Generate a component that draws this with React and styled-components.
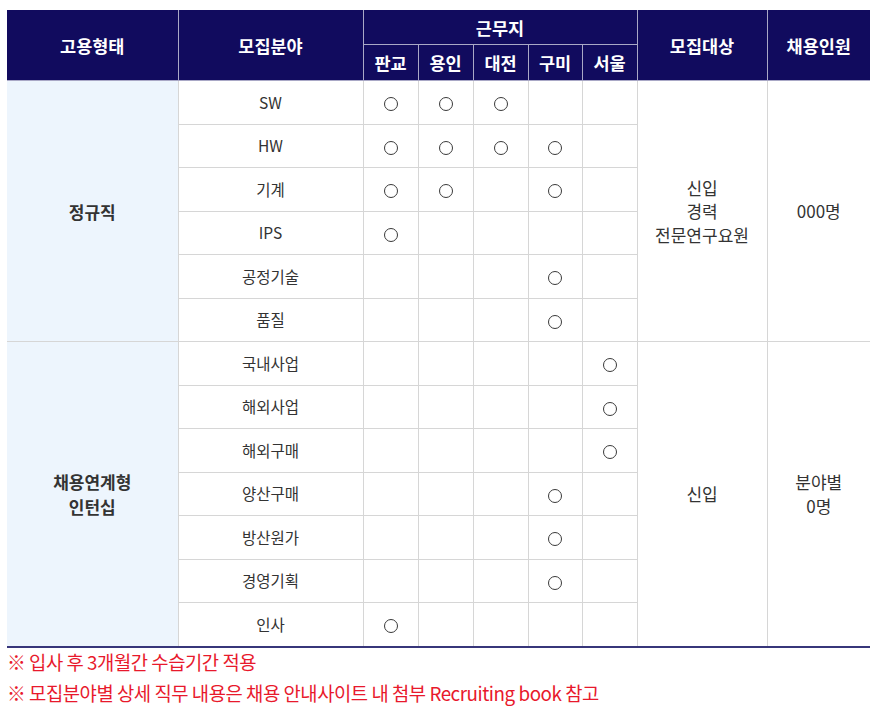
import React from "react";
import styled, { createGlobalStyle } from "styled-components";

const Global = createGlobalStyle`
  html, body { margin: 0; padding: 0; background: #fff; }
  body { font-family: "Noto Sans CJK KR", "Noto Sans", sans-serif; }
`;

const Page = styled.div`
  padding: 10px 0 0 7px;
  width: 863px;
`;

const Table = styled.table`
  width: 863px;
  border-collapse: collapse;
  table-layout: fixed;
  border-bottom: 2px solid #37367a;
`;

const Th = styled.th`
  background: #110b5e;
  color: #fff;
  font-size: 17.5px;
  font-weight: 700;
  text-align: center;
  padding: 0;
  border: 1px solid #a9a8c6;
  border-top: none;
  height: ${(p) => p.$h || 34}px;
  &:first-child { border-left: none; }
  &:last-child { border-right: none; }
`;

const Td = styled.td`
  height: 42.5px;
  padding: 0;
  text-align: center;
  vertical-align: middle;
  font-size: ${(p) => p.$size || 15.5}px;
  color: #333;
  border: 1px solid #d6d6d6;
  background: ${(p) => (p.$group ? "#edf5fd" : "#fff")};
  font-weight: ${(p) => (p.$group ? 700 : 400)};
  line-height: ${(p) => (p.$group ? "25px" : "23.5px")};
`;

const EdgeTd = styled(Td)`
  border-left: none;
`;
const LastTd = styled(Td)`
  border-right: none;
`;

const Circle = styled.span`
  display: inline-block;
  width: 14px;
  height: 14px;
  box-sizing: border-box;
  border: 1.5px solid #3a3a3a;
  border-radius: 50%;
  vertical-align: middle;
`;

const Notes = styled.div`
  margin-top: -2px;
  color: #e8192c;
  font-size: 18.8px;
  line-height: 31px;
  letter-spacing: -0.45px;
`;

const regular = [
  ["SW", [1, 1, 1, 0, 0]],
  ["HW", [1, 1, 1, 1, 0]],
  ["기계", [1, 1, 0, 1, 0]],
  ["IPS", [1, 0, 0, 0, 0]],
  ["공정기술", [0, 0, 0, 1, 0]],
  ["품질", [0, 0, 0, 1, 0]],
];
const intern = [
  ["국내사업", [0, 0, 0, 0, 1]],
  ["해외사업", [0, 0, 0, 0, 1]],
  ["해외구매", [0, 0, 0, 0, 1]],
  ["양산구매", [0, 0, 0, 1, 0]],
  ["방산원가", [0, 0, 0, 1, 0]],
  ["경영기획", [0, 0, 0, 1, 0]],
  ["인사", [1, 0, 0, 0, 0]],
];

function Rows({ data, group, target, count }) {
  return data.map(([name, marks], i) => (
    <tr key={name}>
      {i === 0 && (
        <EdgeTd $group $size={17} rowSpan={data.length}>
          {group}
        </EdgeTd>
      )}
      <Td>{name}</Td>
      {marks.map((m, j) => (
        <Td key={j}>{m ? <Circle /> : null}</Td>
      ))}
      {i === 0 && (
        <Td $size={17} rowSpan={data.length}>
          {target}
        </Td>
      )}
      {i === 0 && (
        <LastTd $size={17} rowSpan={data.length}>
          {count}
        </LastTd>
      )}
    </tr>
  ));
}

export default function App() {
  return (
    <Page>
      <Global />
      <Table>
        <colgroup>
          <col style={{ width: 171 }} />
          <col style={{ width: 185 }} />
          <col style={{ width: 55 }} />
          <col style={{ width: 55 }} />
          <col style={{ width: 55 }} />
          <col style={{ width: 54 }} />
          <col style={{ width: 55 }} />
          <col style={{ width: 130 }} />
          <col style={{ width: 103 }} />
        </colgroup>
        <thead>
          <tr>
            <Th rowSpan={2}>고용형태</Th>
            <Th rowSpan={2}>모집분야</Th>
            <Th colSpan={5}>근무지</Th>
            <Th rowSpan={2}>모집대상</Th>
            <Th rowSpan={2}>채용인원</Th>
          </tr>
          <tr>
            <Th $h={35}>판교</Th>
            <Th $h={35}>용인</Th>
            <Th $h={35}>대전</Th>
            <Th $h={35}>구미</Th>
            <Th $h={35}>서울</Th>
          </tr>
        </thead>
        <tbody>
          <Rows
            data={regular}
            group="정규직"
            target={
              <>
                신입
                <br />
                경력
                <br />
                전문연구요원
              </>
            }
            count="000명"
          />
          <Rows
            data={intern}
            group={
              <>
                채용연계형
                <br />
                인턴십
              </>
            }
            target="신입"
            count={
              <>
                분야별
                <br />
                0명
              </>
            }
          />
        </tbody>
      </Table>
      <Notes>
        <div>※ 입사 후 3개월간 수습기간 적용</div>
        <div>※ 모집분야별 상세 직무 내용은 채용 안내사이트 내 첨부 Recruiting book 참고</div>
      </Notes>
    </Page>
  );
}
